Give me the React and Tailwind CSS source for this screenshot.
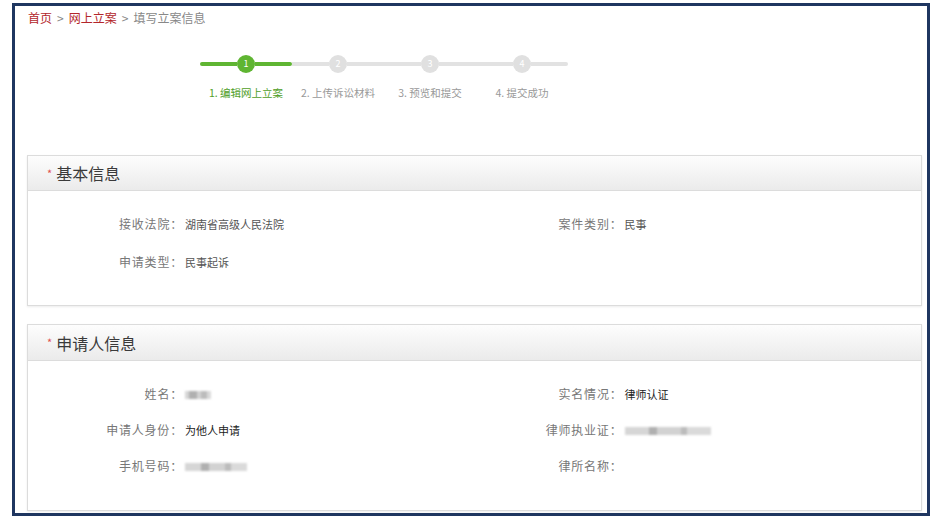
import React from "react";

const font = { fontFamily: '"Noto Sans CJK SC", "Noto Sans", sans-serif' };

const steps = ["1. 编辑网上立案", "2. 上传诉讼材料", "3. 预览和提交", "4. 提交成功"];

function Blur({ w }) {
  // blurred placeholder for hidden personal data
  return (
    <span className="inline-flex items-center h-[10px] blur-[0.8px]" style={{ width: w }}>
      <span className="h-[8px] flex-1 bg-[#d6d6d6]" />
      <span className="h-[8px] w-[8px] bg-[#b0b0b0]" />
      <span className="h-[8px] flex-1 bg-[#d2d2d2]" />
      <span className="h-[8px] w-[6px] bg-[#bcbcbc]" />
      <span className="h-[8px] flex-1 bg-[#dadada]" />
    </span>
  );
}

function Field({ label, labelW, children, dark }) {
  return (
    <div className="flex items-center">
      <span className={`${labelW} shrink-0 text-right text-[12px] tracking-[0.8px] text-[#777]`}>{label}：</span>
      <span className={`ml-[2px] text-[11px] ${dark ? "text-[#222]" : "text-[#555]"}`}>{children}</span>
    </div>
  );
}

function Panel({ title, children, bodyClass, headH }) {
  return (
    <div className="border border-[#dcdcdc] bg-white shadow-[0_1px_2px_rgba(0,0,0,0.08)]">
      <div className={`${headH} flex items-center pl-[19px] border-b border-[#dcdcdc] bg-gradient-to-b from-[#fdfdfd] to-[#ebebeb]`}>
        <span className="text-[#e05050] text-[11px] mr-[4px] leading-none">*</span>
        <span className="text-[16px] text-[#3a3a3a]">{title}</span>
      </div>
      <div className={bodyClass}>{children}</div>
    </div>
  );
}

export default function App() {
  return (
    <div className="w-[937px] h-[521px] bg-white pt-[3px] pl-[12px]" style={font}>
      <div className="w-[918px] h-[513px] border-[3px] border-[#1f3660] overflow-hidden bg-white">
        {/* breadcrumb */}
        <div className="h-[24px] leading-[24px] pl-[13px] text-[12px] text-[#888] flex gap-[5px]">
          <span className="text-[#b3262b]">首页</span>
          <span>&gt;</span>
          <span className="text-[#b3262b]">网上立案</span>
          <span>&gt;</span>
          <span>填写立案信息</span>
        </div>

        {/* steps */}
        <div className="ml-[185px] mt-[25px] w-[368px]">
          <div className="grid grid-cols-4">
            {steps.map((s, i) => {
              const on = i === 0;
              return (
                <div key={s} className="flex items-center h-[18px]">
                  <div className={`flex-1 h-[4px] ${on ? "bg-[#5fb532] rounded-l-full" : "bg-[#e2e2e2]"}`} />
                  <div
                    className={`w-[18px] h-[18px] rounded-full flex items-center justify-center text-[9px] text-white ${
                      on ? "bg-[#5fb532]" : "bg-[#e0e0e0]"
                    }`}
                  >
                    {i + 1}
                  </div>
                  <div
                    className={`flex-1 h-[4px] ${on ? "bg-[#5fb532] rounded-r-full" : "bg-[#e2e2e2]"} ${
                      i === 3 ? "rounded-r-full" : ""
                    }`}
                  />
                </div>
              );
            })}
          </div>
          <div className="grid grid-cols-4 mt-[12px]">
            {steps.map((s, i) => (
              <div
                key={s}
                className={`text-center whitespace-nowrap text-[10.5px] leading-[16px] ${
                  i === 0 ? "text-[#4f9e27]" : "text-[#999]"
                }`}
              >
                {s}
              </div>
            ))}
          </div>
        </div>

        {/* panels */}
        <div className="ml-[12px] mr-[5px] mt-[54px]">
          <Panel title="基本信息" headH="h-[35px]" bodyClass="pt-[14px] pb-[24px]">
            <div className="grid grid-cols-2 [&>*]:h-[38px]">
              <Field label="接收法院" labelW="w-[155px]">湖南省高级人民法院</Field>
              <Field label="案件类别" labelW="w-[148px]">民事</Field>
              <Field label="申请类型" labelW="w-[155px]">民事起诉</Field>
              <div />
            </div>
          </Panel>

          <div className="mt-[18px]">
            <Panel title="申请人信息" headH="h-[36px]" bodyClass="pt-[15px] pb-[26px]">
              <div className="grid grid-cols-2 [&>*]:h-[36px]">
                <Field label="姓名" labelW="w-[155px]">
                  <Blur w={26} />
                </Field>
                <Field label="实名情况" labelW="w-[148px]" dark>
                  律师认证
                </Field>
                <Field label="申请人身份" labelW="w-[155px]" dark>
                  为他人申请
                </Field>
                <Field label="律师执业证" labelW="w-[148px]">
                  <Blur w={86} />
                </Field>
                <Field label="手机号码" labelW="w-[155px]">
                  <Blur w={62} />
                </Field>
                <Field label="律所名称" labelW="w-[148px]"></Field>
              </div>
            </Panel>
          </div>
        </div>
      </div>
    </div>
  );
}
